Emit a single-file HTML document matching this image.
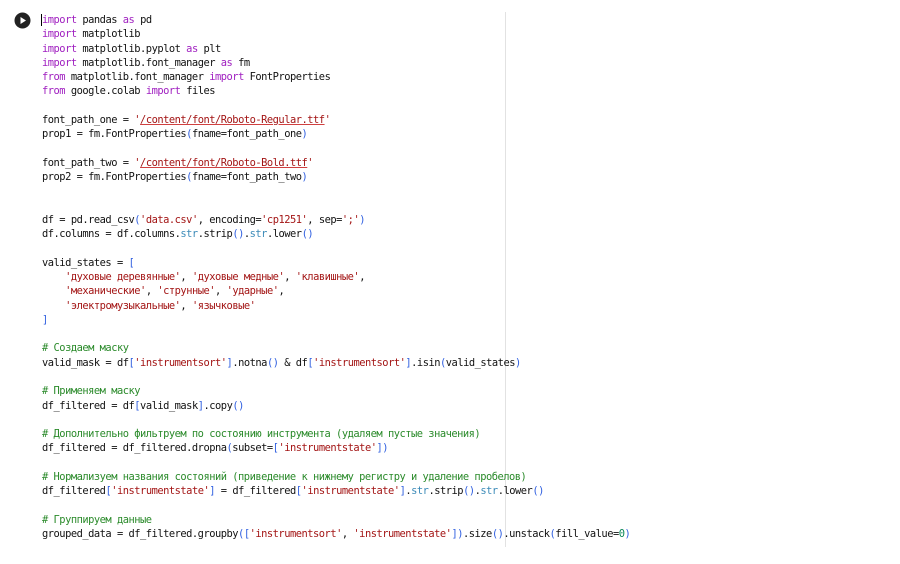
<!DOCTYPE html>
<html><head><meta charset="utf-8"><style>
body{margin:0;width:900px;height:564px;background:#fff;position:relative;overflow:hidden}
pre{position:absolute;left:42px;top:13px;margin:0;font-family:"DejaVu Sans Mono","Liberation Mono",monospace;font-size:10.4px;letter-spacing:-0.49px;line-height:14.28px;color:#111}
.k{color:#a020c0}.s{color:#a31515}.u{color:#a31515;text-decoration:underline;text-decoration-color:#d04040}.c{color:#2a8a2a}.b{color:#2f5fe0}.t{color:#3b8ab8}
.vl{position:absolute;left:505px;top:12px;width:1px;height:535px;background:#e2e2e2}
.cur{position:absolute;left:41px;top:14px;width:1px;height:12px;background:#000}
</style></head><body>
<svg style="position:absolute;left:14px;top:12px" width="17" height="17"><circle cx="8.5" cy="8.5" r="8" fill="#222"/><path d="M6.5 5 L12 8.5 L6.5 12Z" fill="#fff"/></svg>
<div class="vl"></div><div class="cur"></div>
<pre><span class="k">import</span> pandas <span class="k">as</span> pd
<span class="k">import</span> matplotlib
<span class="k">import</span> matplotlib.pyplot <span class="k">as</span> plt
<span class="k">import</span> matplotlib.font_manager <span class="k">as</span> fm
<span class="k">from</span> matplotlib.font_manager <span class="k">import</span> FontProperties
<span class="k">from</span> google.colab <span class="k">import</span> files

font_path_one = <span class="s">'</span><span class="u">/content/font/Roboto-Regular.ttf</span><span class="s">'</span>
prop1 = fm.FontProperties<span class="b">(</span>fname=font_path_one<span class="b">)</span>

font_path_two = <span class="s">'</span><span class="u">/content/font/Roboto-Bold.ttf</span><span class="s">'</span>
prop2 = fm.FontProperties<span class="b">(</span>fname=font_path_two<span class="b">)</span>


df = pd.read_csv<span class="b">(</span><span class="s">'data.csv'</span>, encoding=<span class="s">'cp1251'</span>, sep=<span class="s">';'</span><span class="b">)</span>
df.columns = df.columns.<span class="t">str</span>.strip<span class="b">()</span>.<span class="t">str</span>.lower<span class="b">()</span>

valid_states = <span class="b">[</span>
    <span class="s">'духовые деревянные'</span>, <span class="s">'духовые медные'</span>, <span class="s">'клавишные'</span>,
    <span class="s">'механические'</span>, <span class="s">'струнные'</span>, <span class="s">'ударные'</span>,
    <span class="s">'электромузыкальные'</span>, <span class="s">'язычковые'</span>
<span class="b">]</span>

<span class="c"># Создаем маску</span>
valid_mask = df<span class="b">[</span><span class="s">'instrumentsort'</span><span class="b">]</span>.notna<span class="b">()</span> &amp; df<span class="b">[</span><span class="s">'instrumentsort'</span><span class="b">]</span>.isin<span class="b">(</span>valid_states<span class="b">)</span>

<span class="c"># Применяем маску</span>
df_filtered = df<span class="b">[</span>valid_mask<span class="b">]</span>.copy<span class="b">()</span>

<span class="c"># Дополнительно фильтруем по состоянию инструмента (удаляем пустые значения)</span>
df_filtered = df_filtered.dropna<span class="b">(</span>subset=<span class="b">[</span><span class="s">'instrumentstate'</span><span class="b">])</span>

<span class="c"># Нормализуем названия состояний (приведение к нижнему регистру и удаление пробелов)</span>
df_filtered<span class="b">[</span><span class="s">'instrumentstate'</span><span class="b">]</span> = df_filtered<span class="b">[</span><span class="s">'instrumentstate'</span><span class="b">]</span>.<span class="t">str</span>.strip<span class="b">()</span>.<span class="t">str</span>.lower<span class="b">()</span>

<span class="c"># Группируем данные</span>
grouped_data = df_filtered.groupby<span class="b">([</span><span class="s">'instrumentsort'</span>, <span class="s">'instrumentstate'</span><span class="b">])</span>.size<span class="b">()</span>.unstack<span class="b">(</span>fill_value=<span class="s" style="color:#098658">0</span><span class="b">)</span></pre>
</body></html>
